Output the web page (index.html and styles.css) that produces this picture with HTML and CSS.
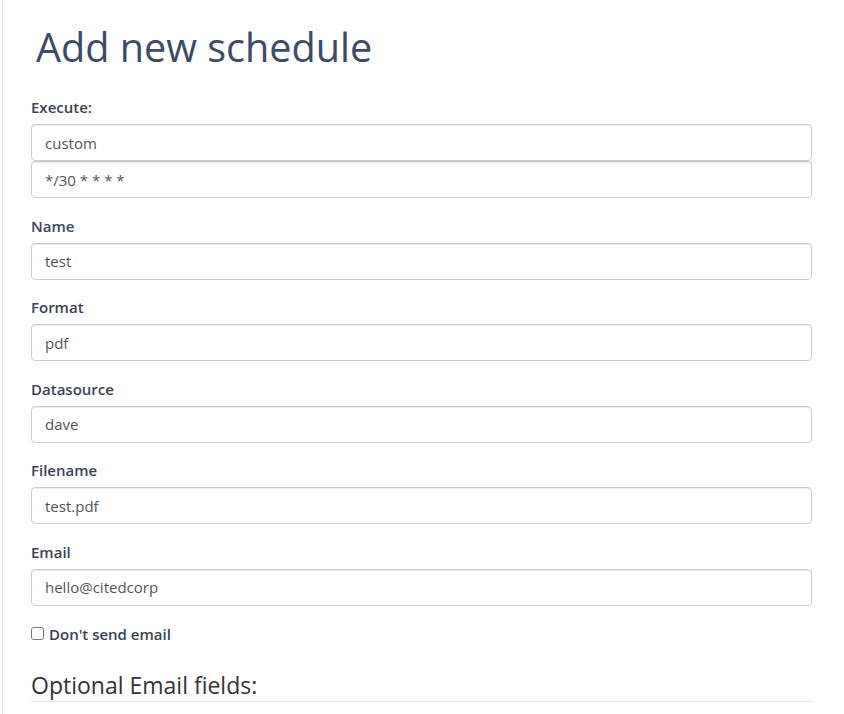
FILE: index.html
```html
<!DOCTYPE html>
<html lang="en">
<head>
    <meta charset="UTF-8">
    <meta name="viewport" content="width=device-width, initial-scale=1.0">
    <title>Add new schedule</title>
    <link rel="stylesheet" href="styles.css">
</head>
<body>

    <div class="page">
        <div class="container">
            <h1>Add new schedule</h1>

            <!-- schedule timing -->
            <div class="field">
                <label for="execute">Execute:</label>
                <input type="text" id="execute" value="custom">
                <input type="text" id="cron" value="*/30 * * * *">
            </div>

            <div class="field">
                <label for="name">Name</label>
                <input type="text" id="name" value="test">
            </div>

            <div class="field">
                <label for="format">Format</label>
                <input type="text" id="format" value="pdf">
            </div>

            <div class="field">
                <label for="datasource">Datasource</label>
                <input type="text" id="datasource" value="dave">
            </div>

            <div class="field">
                <label for="filename">Filename</label>
                <input type="text" id="filename" value="test.pdf">
            </div>

            <div class="field">
                <label for="email">Email</label>
                <input type="text" id="email" value="hello@citedcorp">
            </div>

            <div class="checkbox">
                <input type="checkbox" id="noEmail">
                <label for="noEmail">Don't send email</label>
            </div>

            <h3>Optional Email fields:</h3>
        </div>
    </div>

</body>
</html>
```

FILE: styles.css
```css
body {
    margin: 0;
    font-family: "Open Sans", Arial, sans-serif;
    color: #333;
    background: white;
}
.page {
    margin-left: 2px;
    border-left: 1px solid #e8e8e8;
    min-height: 714px;
}
.container {
    width: 781px;
    padding-left: 28px;
}
h1 {
    margin: 0;
    padding: 18px 0 0 5px;
    font-size: 39.6px;
    font-weight: 400;
    line-height: 58px;
    color: #3d4b66;
}
.field {
    margin-top: 21px;
}
.field + .field {
    margin-top: 17.5px;
}
label {
    display: block;
    font-size: 15px;
    font-weight: 600;
    color: #3a4354;
    line-height: 20px;
    margin-bottom: 7px;
}
input[type="text"] {
    display: block;
    box-sizing: border-box;
    width: 100%;
    height: 37px;
    padding: 6px 13px;
    margin: 0;
    font-family: inherit;
    font-size: 15px;
    color: #555;
    border: 1px solid #ccc;
    border-radius: 4px;
    box-shadow: inset 0 1px 1px rgba(0, 0, 0, 0.075);
}
.checkbox {
    display: flex;
    align-items: center;
    margin-top: 18px;
}
.checkbox input {
    margin: 0 5px 0 0;
    width: 13px;
    height: 13px;
}
.checkbox label {
    display: inline;
    margin: 0;
}
h3 {
    margin: 26px 0 0;
    padding-bottom: 1px;
    font-size: 23px;
    font-weight: 400;
    line-height: 30px;
    color: #333;
    border-bottom: 1px solid #e5e5e5;
}
```
